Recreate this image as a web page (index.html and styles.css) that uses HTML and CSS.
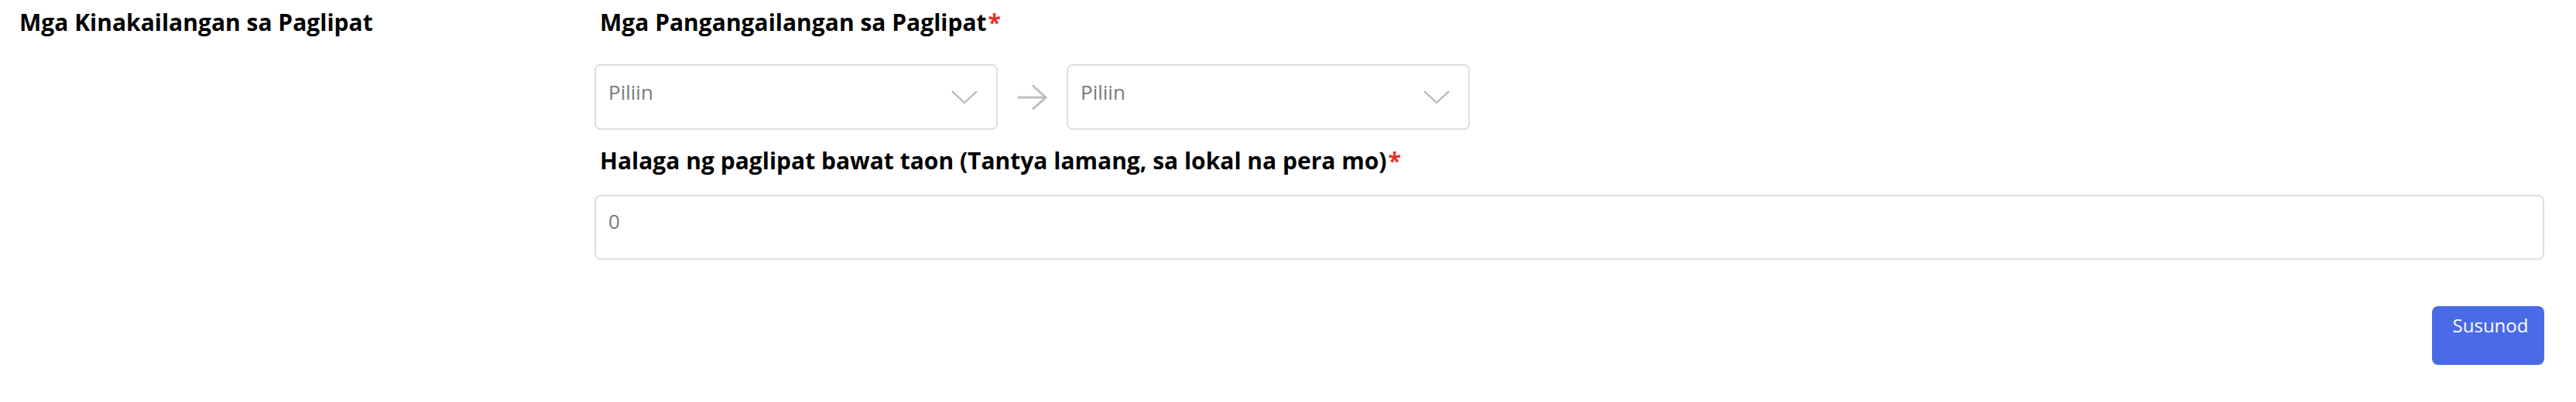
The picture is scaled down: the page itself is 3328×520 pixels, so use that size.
FILE: index.html
```html
<!DOCTYPE html>
<html lang="tl">
<head>
    <meta charset="UTF-8">
    <meta name="viewport" content="width=device-width, initial-scale=1.0">
    <title>Mga Kinakailangan sa Paglipat</title>
    <link rel="stylesheet" href="styles.css">
</head>
<body>
    <div class="page">
        <div class="side">
            <h2 class="side-title">Mga Kinakailangan sa Paglipat</h2>
        </div>
        <div class="form">
            <label class="field-label">Mga Pangangailangan sa Paglipat<span class="req">*</span></label>
            <div class="select-row">
                <div class="select">
                    <span class="placeholder">Piliin</span>
                    <svg class="chevron" width="34" height="18" viewBox="0 0 34 18">
                        <polyline points="1,1 17,16 33,1" fill="none" stroke="#b3b3b3" stroke-width="2"/>
                    </svg>
                </div>
                <div class="arrow">
                    <svg width="40" height="34" viewBox="0 0 40 34">
                        <path d="M1 17 H37" fill="none" stroke="#bdbdbd" stroke-width="3"/>
                        <polyline points="20,1.5 37,17 20,32.5" fill="none" stroke="#bdbdbd" stroke-width="3"/>
                    </svg>
                </div>
                <div class="select">
                    <span class="placeholder">Piliin</span>
                    <svg class="chevron" width="34" height="18" viewBox="0 0 34 18">
                        <polyline points="1,1 17,16 33,1" fill="none" stroke="#b3b3b3" stroke-width="2"/>
                    </svg>
                </div>
            </div>
            <label class="field-label second">Halaga ng paglipat bawat taon (Tantya lamang, sa lokal na pera mo)<span class="req">*</span></label>
            <div class="text-input">
                <span class="placeholder">0</span>
            </div>
            <div class="actions">
                <button class="next-button">Susunod</button>
            </div>
        </div>
    </div>
</body>
</html>
```
FILE: styles.css
```css
body {
    margin: 0;
    font-family: "Open Sans", "Noto Sans", sans-serif;
    background-color: white;
    color: #000;
}
.page {
    display: grid;
    grid-template-columns: 767px 1fr;
    padding-right: 41px;
}
.side {
    padding-left: 25px;
}
.side-title {
    margin: 8px 0 0;
    font-size: 30px;
    line-height: 41px;
    font-weight: 700;
}
.form {
    display: flex;
    flex-direction: column;
    padding-left: 1px;
}
.field-label {
    margin-top: 8px;
    padding-left: 7px;
    font-size: 30px;
    line-height: 41px;
    font-weight: 700;
}
.field-label.second {
    margin-top: 19px;
}
.req {
    color: #e8302a;
    margin-left: 2px;
}
.select-row {
    display: flex;
    align-items: center;
    margin-top: 34px;
}
.select {
    width: 521px;
    height: 85px;
    box-sizing: border-box;
    border: 2px solid #dedede;
    border-radius: 8px;
    padding: 16px 24px 0 16px;
    display: flex;
    justify-content: space-between;
}
.placeholder {
    font-size: 26px;
    line-height: 36px;
    color: #7a7a7a;
}
.chevron {
    align-self: center;
    margin-top: -16px;
}
.arrow {
    width: 89px;
    display: flex;
    justify-content: center;
}
.text-input {
    margin-top: 24px;
    height: 84px;
    box-sizing: border-box;
    border: 2px solid #dedede;
    border-radius: 8px;
    padding: 14px 16px 0;
}
.actions {
    display: flex;
    justify-content: flex-end;
    margin-top: 60px;
}
.next-button {
    width: 145px;
    height: 76px;
    box-sizing: border-box;
    padding: 8px 0 0 6px;
    display: flex;
    justify-content: center;
    align-items: flex-start;
    border: none;
    border-radius: 8px;
    background-color: #4a6be8;
    color: white;
    font-family: "Open Sans", "Noto Sans", sans-serif;
    font-size: 24px;
    line-height: 33px;
}
```
